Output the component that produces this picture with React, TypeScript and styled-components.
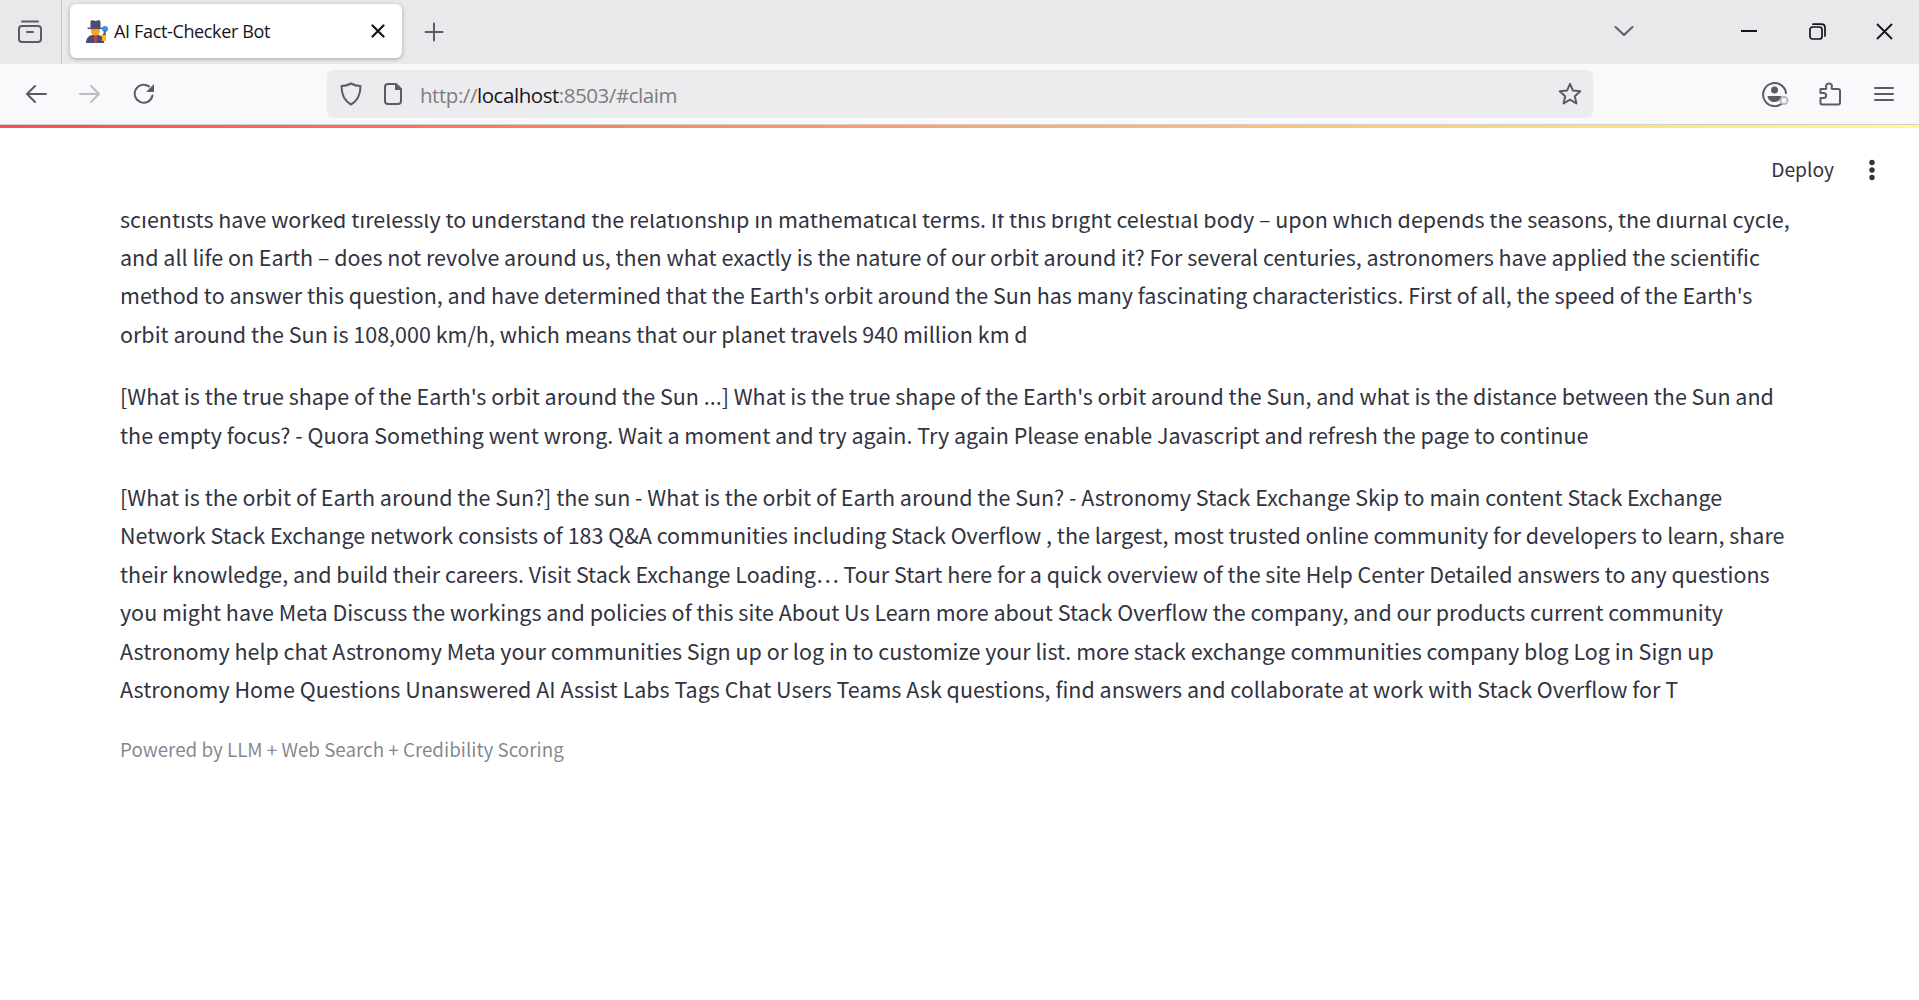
import React, { FC } from 'react';
import styled, { createGlobalStyle } from 'styled-components';

const GlobalStyle = createGlobalStyle`
    html, body {
        margin: 0;
        padding: 0;
        background: #ffffff;
    }
    body {
        height: 1000px;
        overflow: hidden;
    }
`;

const Window = styled.div`
    width: 1919px;
    height: 1000px;
    display: flex;
    flex-direction: column;
    overflow: hidden;
`;

const TabStrip = styled.div`
    height: 64px;
    flex: none;
    display: flex;
    align-items: flex-start;
    background: #e9e9ec;
`;

const SideSlot = styled.div`
    width: 62px;
    height: 64px;
    padding-right: 2px;
    border-right: 1px solid #c6c6ca;
    display: flex;
    align-items: center;
    justify-content: center;
    box-sizing: border-box;
    flex: none;
`;

const Tab = styled.div`
    width: 332px;
    height: 54px;
    margin: 4px 0 0 8px;
    padding: 0 17px 0 16px;
    box-sizing: border-box;
    background: #ffffff;
    border-radius: 6px;
    box-shadow: 0 1px 4px rgba(0, 0, 0, 0.3);
    display: flex;
    align-items: center;
    flex: none;
`;

const TabTitle = styled.span`
    margin-left: 6px;
    flex: 1;
    font: 18px 'Open Sans', 'Noto Sans', sans-serif;
    letter-spacing: -0.35px;
    color: #15141a;
`;

const NewTab = styled.div`
    width: 64px;
    height: 64px;
    display: flex;
    align-items: center;
    justify-content: center;
    flex: none;
`;

const Spacer = styled.div`
    flex: 1;
`;

const StripButton = styled.div<{ $width: number }>`
    width: ${(p) => p.$width}px;
    height: 62px;
    display: flex;
    align-items: center;
    justify-content: center;
    flex: none;
`;

const Toolbar = styled.div`
    height: 61px;
    flex: none;
    box-sizing: border-box;
    background: #f9f9fb;
    border-bottom: 1px solid #cfcfd8;
    display: flex;
    align-items: center;
`;

const NavButton = styled.div`
    width: 54px;
    height: 48px;
    display: flex;
    align-items: center;
    justify-content: center;
    flex: none;
`;

const NavGroup = styled.div`
    display: flex;
    padding-left: 9px;
    width: 327px;
    box-sizing: border-box;
    flex: none;
`;

const UrlBar = styled.div`
    width: 1266px;
    height: 48px;
    flex: none;
    background: #ececee;
    border-radius: 6px;
    display: flex;
    align-items: center;
    padding: 0 11px 0 9px;
    box-sizing: border-box;
`;

const UrlIcon = styled.div`
    width: 30px;
    height: 30px;
    margin-right: 12px;
    display: flex;
    align-items: center;
    justify-content: center;
    flex: none;
`;

const UrlText = styled.div`
    flex: 1;
    padding-top: 1px;
    font: 20.5px 'Open Sans', 'Noto Sans', sans-serif;
    letter-spacing: -0.45px;
    color: #7c7c81;
`;

const UrlHost = styled.span`
    color: #15141a;
`;

const ToolbarEnd = styled.div`
    flex: 1;
    display: flex;
    justify-content: flex-end;
    padding-right: 8px;
`;

const Decoration = styled.div`
    height: 3px;
    flex: none;
    background: linear-gradient(90deg, rgb(255, 75, 75), rgb(255, 253, 128));
`;

const Page = styled.main`
    flex: 1;
    position: relative;
    overflow: hidden;
    padding: 71.5px 120px 0;
    background: #ffffff;
    font-family: 'Noto Sans CJK SC', 'Noto Sans', sans-serif;
    color: #31333f;
`;

const Header = styled.header`
    position: absolute;
    top: 0;
    left: 0;
    right: 0;
    height: 86px;
    background: #ffffff;
    display: flex;
    align-items: flex-start;
    justify-content: flex-end;
    padding-top: 27px;
    box-sizing: border-box;
`;

const DeployLabel = styled.span`
    font-size: 19.2px;
    line-height: 28px;
    color: #31333f;
    margin-right: 27px;
`;

const MenuDots = styled.div`
    width: 58px;
    height: 30px;
    display: flex;
    align-items: center;
    padding-left: 7px;
    box-sizing: border-box;
`;

const Paragraph = styled.p`
    margin: 0 0 24px;
    font-size: 21.49px;
    line-height: 38.4px;
`;

const Caption = styled.p`
    margin: -0.5px 0 0;
    font-size: 18.8px;
    line-height: 33.6px;
    color: rgba(49, 51, 63, 0.6);
`;

const stroke = (color: string, width = 2) => ({
    fill: 'none',
    stroke: color,
    strokeWidth: width,
    strokeLinecap: 'round' as const,
    strokeLinejoin: 'round' as const,
});

const DetectiveEmoji: FC = () => (
    <svg width="22" height="24" viewBox="0 0 22 24">
        <path d="M0 24c0-5 3-8 7-8h5c4 0 6 3 6 8z" fill="#4f4a70" />
        <path d="M8 16h3l-.4 8H8.400z" fill="#c7415a" />
        <circle cx="9.500" cy="12" r="4.600" fill="#f5a623" />
        <path d="M1.500 8.500h16v1.600h-16z" fill="#5a5480" />
        <path d="M4.500 9V3.200C4.500 1.600 6 1 7.500 1.600c1.300.5 2.600.5 4 0 1.500-.6 3 0 3 1.600V9z" fill="#4f4a70" />
        <path d="M16 22v-7h4v7z" fill="#f5b52e" />
        <circle cx="19" cy="10" r="3" fill="#3f8fe0" />
        <path d="M18 12l-1 4h3l-.5-4z" fill="#55606e" />
    </svg>
);

const FirefoxViewIcon: FC = () => (
    <svg width="24" height="24" viewBox="0 0 24 24">
        <g {...stroke('#5b5b66')}>
            <rect x="1" y="6" width="22" height="16" rx="3" />
            <path d="M4 1.500h16" />
            <path d="M9 12h6" />
        </g>
    </svg>
);

const CloseIcon: FC = () => (
    <svg width="14" height="14" viewBox="0 0 14 14">
        <path d="M1.500 1.500l11 11M12.500 1.500l-11 11" {...stroke('#15141a', 2.2)} />
    </svg>
);

const PlusIcon: FC = () => (
    <svg width="20" height="20" viewBox="0 0 20 20">
        <path d="M10 1.500v17M1.500 10h17" {...stroke('#5b5b66', 2)} />
    </svg>
);

const ChevronIcon: FC = () => (
    <svg width="20" height="12" viewBox="0 0 20 12">
        <path d="M1.500 2L10 10l8.500-8" {...stroke('#5b5b66', 2)} />
    </svg>
);

const MinimizeIcon: FC = () => (
    <svg width="16" height="4" viewBox="0 0 16 4">
        <path d="M0 2h16" stroke="#15141a" strokeWidth="2" />
    </svg>
);

const RestoreIcon: FC = () => (
    <svg width="17" height="17" viewBox="0 0 17 17">
        <g {...stroke('#15141a', 1.7)}>
            <rect x="1" y="4" width="12" height="12" rx="2.500" />
            <path d="M4 1.200h8.500c2 0 3.500 1.500 3.500 3.500V13" />
        </g>
    </svg>
);

const WindowCloseIcon: FC = () => (
    <svg width="17" height="17" viewBox="0 0 17 17">
        <path d="M1 1l15 15M16 1L1 16" stroke="#15141a" strokeWidth="1.800" />
    </svg>
);

const BackIcon: FC<{ color: string }> = ({ color }) => (
    <svg width="22" height="20" viewBox="0 0 22 20">
        <path d="M21 10H2M10 2l-8 8 8 8" {...stroke(color, 2)} />
    </svg>
);

const ForwardIcon: FC<{ color: string }> = ({ color }) => (
    <svg width="22" height="20" viewBox="0 0 22 20">
        <path d="M1 10h19M12 2l8 8-8 8" {...stroke(color, 2)} />
    </svg>
);

const ReloadIcon: FC = () => (
    <svg width="22" height="22" viewBox="0 0 22 22">
        <path d="M19.500 12.500A9 9 0 1 1 16 3.400" {...stroke('#5b5b66', 2)} />
        <path d="M21 1v8h-8z" fill="#5b5b66" />
    </svg>
);

const ShieldIcon: FC = () => (
    <svg width="22" height="24" viewBox="0 0 22 24">
        <path d="M11 1.500c3 1.600 6 2.400 9.500 2.600 0 9-2.500 14.600-9.500 18.400C4 18.700 1.500 13.100 1.500 4.100 5 3.900 8 3.100 11 1.500z" {...stroke('#5b5b66', 2)} />
    </svg>
);

const PageIcon: FC = () => (
    <svg width="18" height="22" viewBox="0 0 18 22">
        <path d="M4 1h8l5 5v12a3 3 0 0 1-3 3H4a3 3 0 0 1-3-3V4a3 3 0 0 1 3-3z" {...stroke('#5b5b66', 2)} />
        <path d="M11 1l6 6h-6z" fill="#5b5b66" />
    </svg>
);

const StarIcon: FC = () => (
    <svg width="24" height="24" viewBox="0 0 24 24">
        <path d="M12 1.800l3 6.800 7.300.7-5.500 4.900 1.600 7.300-6.400-3.800-6.400 3.800 1.600-7.300-5.500-4.900 7.300-.7z" {...stroke('#5b5b66', 2)} />
    </svg>
);

const AccountIcon: FC = () => (
    <svg width="28" height="26" viewBox="0 0 28 26">
        <path d="M21 21.500A11.500 11.500 0 1 1 24 12" {...stroke('#5b5b66', 2)} />
        <circle cx="12.500" cy="9" r="3.500" fill="#5b5b66" />
        <path d="M5.500 15h14c-.6 4-3.400 6-7 6s-6.400-2-7-6z" fill="#5b5b66" />
        <circle cx="22" cy="19.500" r="3.500" fill="#f9f9fb" stroke="#b8b8bd" strokeWidth="2" />
    </svg>
);

const PuzzleIcon: FC = () => (
    <svg width="22" height="24" viewBox="0 0 22 24">
        <path d="M1.500 7h5c1 0 1.200-.8.800-1.600C6.500 3.700 7.500 1.500 10 1.500s3.500 2.200 2.700 3.900c-.4.800-.2 1.600.8 1.600H19a2 2 0 0 1 2 2v11.500a2 2 0 0 1-2 2H3a1.500 1.500 0 0 1-1.500-1.500v-5h3c3.500 0 3.500-5 0-5h-3z" {...stroke('#5b5b66', 2)} />
    </svg>
);

const BurgerIcon: FC = () => (
    <svg width="20" height="16" viewBox="0 0 20 16">
        <path d="M1 2h18M1 8h18M1 14h18" {...stroke('#5b5b66', 2)} />
    </svg>
);

const DotsIcon: FC = () => (
    <svg width="8" height="22" viewBox="0 0 8 22">
        <circle cx="4" cy="3.500" r="2.700" fill="#31333f" />
        <circle cx="4" cy="11" r="2.700" fill="#31333f" />
        <circle cx="4" cy="18.500" r="2.700" fill="#31333f" />
    </svg>
);

const paragraphs: string[] = [
    "scientists have worked tirelessly to understand the relationship in mathematical terms. If this bright celestial body – upon which depends the seasons, the diurnal cycle, and all life on Earth – does not revolve around us, then what exactly is the nature of our orbit around it? For several centuries, astronomers have applied the scientific method to answer this question, and have determined that the Earth's orbit around the Sun has many fascinating characteristics. First of all, the speed of the Earth's orbit around the Sun is 108,000 km/h, which means that our planet travels 940 million km d",
    "[What is the true shape of the Earth's orbit around the Sun ...] What is the true shape of the Earth's orbit around the Sun, and what is the distance between the Sun and the empty focus? - Quora Something went wrong. Wait a moment and try again. Try again Please enable Javascript and refresh the page to continue",
    "[What is the orbit of Earth around the Sun?] the sun - What is the orbit of Earth around the Sun? - Astronomy Stack Exchange Skip to main content Stack Exchange Network Stack Exchange network consists of 183 Q&A communities including Stack Overflow , the largest, most trusted online community for developers to learn, share their knowledge, and build their careers. Visit Stack Exchange Loading… Tour Start here for a quick overview of the site Help Center Detailed answers to any questions you might have Meta Discuss the workings and policies of this site About Us Learn more about Stack Overflow the company, and our products current community Astronomy help chat Astronomy Meta your communities Sign up or log in to customize your list. more stack exchange communities company blog Log in Sign up Astronomy Home Questions Unanswered AI Assist Labs Tags Chat Users Teams Ask questions, find answers and collaborate at work with Stack Overflow for T",
];

const App: FC = () => (
    <Window>
        <GlobalStyle />
        <TabStrip>
            <SideSlot>
                <FirefoxViewIcon />
            </SideSlot>
            <Tab>
                <DetectiveEmoji />
                <TabTitle>AI Fact-Checker Bot</TabTitle>
                <CloseIcon />
            </Tab>
            <NewTab>
                <PlusIcon />
            </NewTab>
            <Spacer />
            <StripButton $width={62}>
                <ChevronIcon />
            </StripButton>
            <StripButton $width={58} />
            <StripButton $width={72}>
                <MinimizeIcon />
            </StripButton>
            <StripButton $width={64}>
                <RestoreIcon />
            </StripButton>
            <StripButton $width={70}>
                <WindowCloseIcon />
            </StripButton>
        </TabStrip>
        <Toolbar>
            <NavGroup>
                <NavButton>
                    <BackIcon color="#5b5b66" />
                </NavButton>
                <NavButton>
                    <ForwardIcon color="#bcbcc2" />
                </NavButton>
                <NavButton>
                    <ReloadIcon />
                </NavButton>
            </NavGroup>
            <UrlBar>
                <UrlIcon>
                    <ShieldIcon />
                </UrlIcon>
                <UrlIcon>
                    <PageIcon />
                </UrlIcon>
                <UrlText>
                    http://<UrlHost>localhost</UrlHost>:8503/#claim
                </UrlText>
                <StarIcon />
            </UrlBar>
            <ToolbarEnd>
                <NavButton>
                    <AccountIcon />
                </NavButton>
                <NavButton>
                    <PuzzleIcon />
                </NavButton>
                <NavButton>
                    <BurgerIcon />
                </NavButton>
            </ToolbarEnd>
        </Toolbar>
        <Decoration />
        <Page>
            {paragraphs.map((text) => (
                <Paragraph key={text.slice(0, 24)}>{text}</Paragraph>
            ))}
            <Caption>Powered by LLM + Web Search + Credibility Scoring</Caption>
            <Header>
                <DeployLabel>Deploy</DeployLabel>
                <MenuDots>
                    <DotsIcon />
                </MenuDots>
            </Header>
        </Page>
    </Window>
);

export default App;
